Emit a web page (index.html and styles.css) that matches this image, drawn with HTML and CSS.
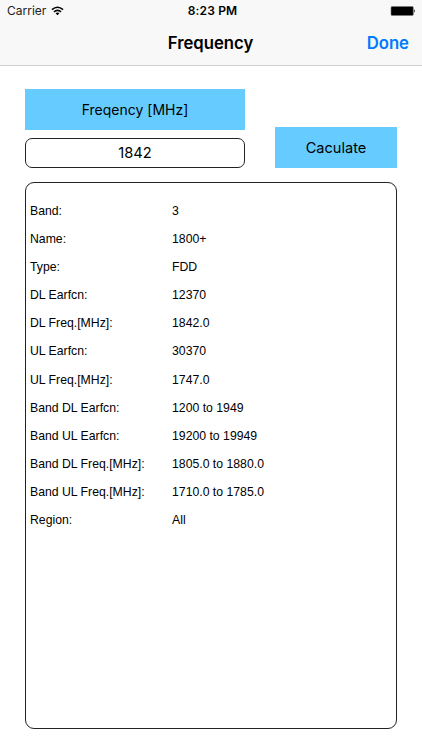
FILE: index.html
```html
<!DOCTYPE html>
<html lang="en">
<head>
<meta charset="utf-8">
<title>Frequency</title>
<link rel="stylesheet" href="styles.css">
</head>
<body>
<header class="top">
  <div class="status">
    <div class="carrier"><span>Carrier</span>
      <svg class="wifi" viewBox="0 0 14 10" width="13" height="10" fill="none" stroke="#000" stroke-width="1.7"><path d="M1 3.6Q7-1.6 13 3.6M3.2 6Q7 2.6 10.8 6"/><path d="M7 9.7L4.9 7.5Q7 5.8 9.1 7.5Z" fill="#000" stroke="none"/></svg>
    </div>
    <div class="time">8:23 PM</div>
    <svg class="battery" viewBox="0 0 26 10" width="26" height="10"><rect x="1" y=".4" width="22.3" height="9.2" rx="1.3" stroke="#777" stroke-width=".6"/><path d="M24 3.2q1.8 1.8 0 3.6z"/></svg>
  </div>
  <nav class="nav"><h1 class="title">Frequency</h1><a class="done">Done</a></nav>
</header>
<main class="main">
  <section class="form">
    <div class="entry">
      <div class="label">Freqency [MHz]</div>
      <div class="field">1842</div>
    </div>
    <button class="calc">Caculate</button>
  </section>
  <dl class="results">
    <dt>Band:</dt><dd>3</dd>
    <dt>Name:</dt><dd>1800+</dd>
    <dt>Type:</dt><dd>FDD</dd>
    <dt>DL Earfcn:</dt><dd>12370</dd>
    <dt>DL Freq.[MHz]:</dt><dd>1842.0</dd>
    <dt>UL Earfcn:</dt><dd>30370</dd>
    <dt>UL Freq.[MHz]:</dt><dd>1747.0</dd>
    <dt>Band DL Earfcn:</dt><dd>1200 to 1949</dd>
    <dt>Band UL Earfcn:</dt><dd>19200 to 19949</dd>
    <dt>Band DL Freq.[MHz]:</dt><dd>1805.0 to 1880.0</dd>
    <dt>Band UL Freq.[MHz]:</dt><dd>1710.0 to 1785.0</dd>
    <dt>Region:</dt><dd>All</dd>
  </dl>
</main>
</body>
</html>
```
FILE: styles.css
```css
* { box-sizing: border-box; }
body { margin: 0; height: 750px; background: #fff; color: #000; font-family: Inter, sans-serif; overflow: hidden; }
.top { height: 66px; background: #f8f8f8; border-bottom: 1px solid #d0d0d0; }
.status { height: 21px; display: grid; grid-template-columns: 1fr auto 1fr; align-items: center; padding: 0 6px 0 7px; font-size: 12px; }
.carrier { display: flex; align-items: center; gap: 5px; color: #222; }
.time { font-weight: 600; padding-left: 2px; letter-spacing: .15px; }
.battery { justify-self: end; }
.nav { height: 43px; display: grid; grid-template-columns: 1fr auto 1fr; align-items: center; padding: 0 13px 0 12px; font-size: 16.7px; font-weight: 600; }
.title { grid-column: 2; margin: 0; font-size: 16.7px; font-weight: 600; }
.done { justify-self: end; color: #007aff; }
.main { padding: 23px 25px 0 25px; }
.form { display: flex; justify-content: space-between; align-items: flex-end; height: 79px; }
.entry { width: 220px; }
.label, .calc { background: #66ccff; display: flex; align-items: center; justify-content: center; }
.label { height: 41px; font-size: 14px; }
.field { height: 31px; margin-top: 8px; border: 1px solid #222; border-radius: 7px; display: flex; align-items: center; justify-content: center; font-size: 14.7px; }
.label { height: 40.5px; }
.field { height: 30.5px; }
.calc { width: 122px; height: 41px; border: 0; padding: 0; font: 14.6px Inter, sans-serif; color: #000; }
.results { margin: 14px 0 0; height: 547px; border: 1px solid #222; border-radius: 9px; padding: 14px 4px; display: grid; grid-template-columns: 142px 1fr; grid-auto-rows: 28.1px; align-content: start; font: 12.25px/28px "Liberation Sans", sans-serif; }
.results dd { margin: 0; }
```
